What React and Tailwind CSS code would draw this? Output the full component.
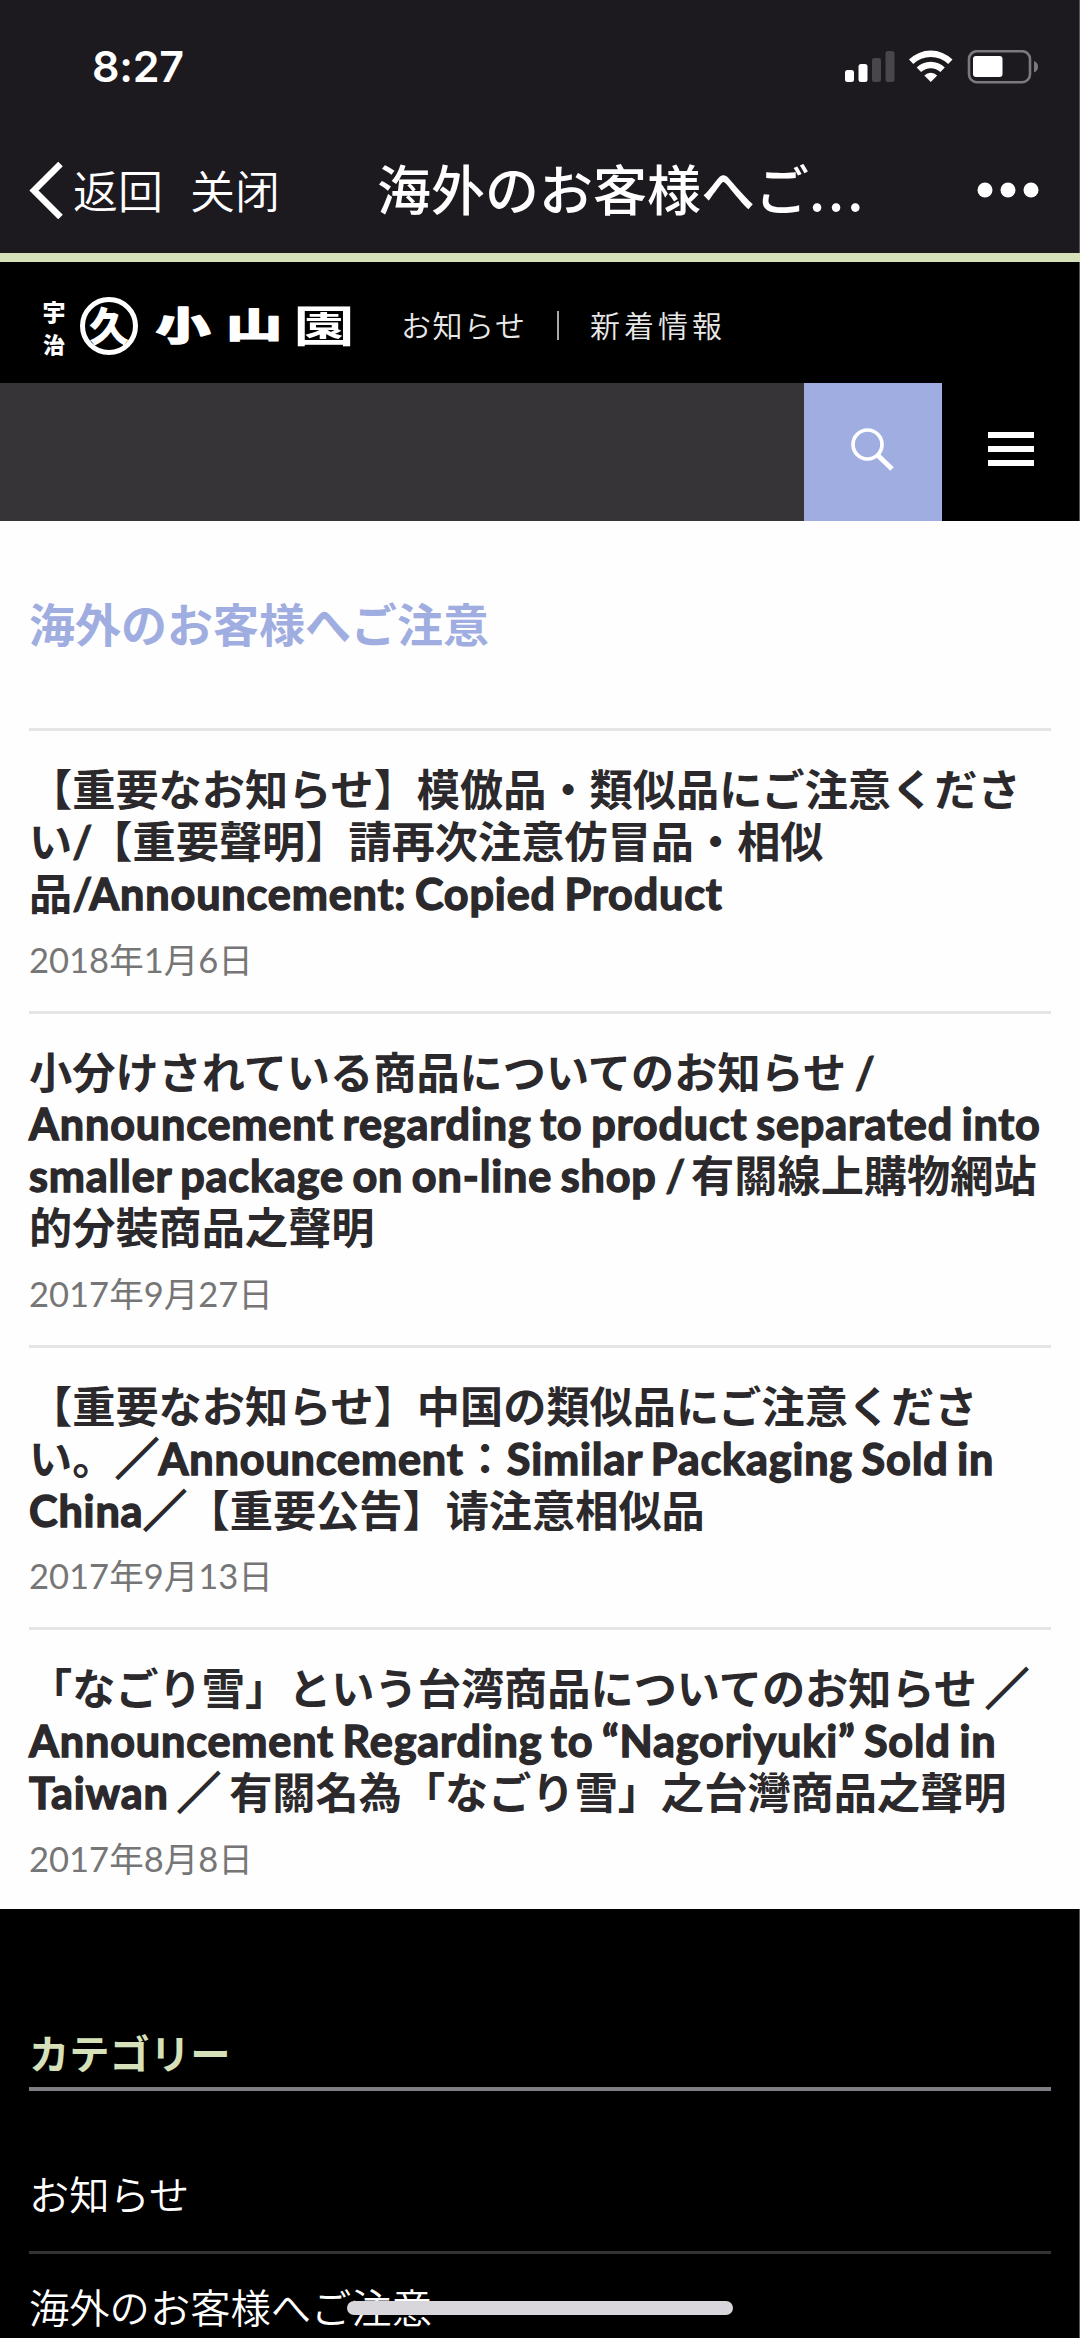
const articles = [
  {
    lines: [
      '【重要なお知らせ】模倣品・類似品にご注意くださ',
      'い/【重要聲明】請再次注意仿冒品・相似',
      '品/Announcement: Copied Product',
    ],
    date: '2018年1月6日',
  },
  {
    lines: [
      '小分けされている商品についてのお知らせ /',
      'Announcement regarding to product separated into',
      'smaller package on on-line shop / 有關線上購物網站',
      '的分裝商品之聲明',
    ],
    date: '2017年9月27日',
  },
  {
    lines: [
      '【重要なお知らせ】中国の類似品にご注意くださ',
      'い。／Announcement：Similar Packaging Sold in',
      'China／【重要公告】请注意相似品',
    ],
    date: '2017年9月13日',
  },
  {
    lines: [
      '「なごり雪」という台湾商品についてのお知らせ ／',
      'Announcement Regarding to “Nagoriyuki” Sold in',
      'Taiwan ／ 有關名為「なごり雪」之台灣商品之聲明',
    ],
    date: '2017年8月8日',
  },
];

const categories = ['お知らせ', '海外のお客様へご注意'];

function StatusBar() {
  return (
    <div className="flex h-[127px] items-start justify-between pl-[92px] pr-[41px] pt-[42px]">
      <span className="font-['Inter',sans-serif] text-[43px] font-semibold leading-[48px] tracking-[-0.3px]">8:27</span>
      <svg width="194" height="34" viewBox="0 0 194 34" className="mt-[8px]" fill="#fff">
        <rect x="0" y="20" width="9" height="12" rx="2.5" />
        <rect x="13.5" y="14" width="9" height="18" rx="2.5" />
        <rect x="27" y="8" width="9" height="24" rx="2.5" fill="#48464b" />
        <rect x="40.5" y="1" width="9" height="31" rx="2.5" fill="#48464b" />
        <path d="M64 9.5a31 31 0 0 1 43.5 0l-4.3 4.6a25 25 0 0 0-34.9 0z" />
        <path d="M71.7 17.5a20 20 0 0 1 28.1 0l-4.4 4.6a13.8 13.8 0 0 0-19.3 0z" />
        <path d="M79.3 25.4a9.3 9.3 0 0 1 12.9 0l-6.4 6.7z" />
        <rect x="124" y="1.2" width="61" height="31" rx="8" fill="none" stroke="#7b797e" strokeWidth="2.6" />
        <rect x="128" y="6" width="29.5" height="21" rx="3" />
        <path d="M189 11q4 1.5 4 5.7t-4 5.7z" fill="#7b797e" />
      </svg>
    </div>
  );
}

function NavBar() {
  return (
    <div className="flex h-[126px] items-center pl-[29px] pr-[41px]">
      <svg width="36" height="58" viewBox="0 0 36 58" fill="none" stroke="#fff" strokeWidth="6.5">
        <path d="M31.5 3L5 29.5L31.5 56" />
      </svg>
      <span className="ml-[8px] w-[117px] text-[45px] font-[350]">返回</span>
      <span className="w-[187px] text-[45px] font-[350]">关闭</span>
      <h1 className="flex items-baseline whitespace-nowrap pb-[5px] text-[54px] font-medium">
        海外のお客様へご
        <span className="tracking-[3px]">...</span>
      </h1>
      <svg width="62" height="16" viewBox="0 0 62 16" className="ml-auto" fill="#fff">
        <circle cx="8" cy="8" r="7.5" />
        <circle cx="31" cy="8" r="7.5" />
        <circle cx="54" cy="8" r="7.5" />
      </svg>
    </div>
  );
}

function Logo() {
  return (
    <svg
      width="316"
      height="68"
      viewBox="0 0 316 68"
      className="font-['Noto_Sans_CJK_JP',sans-serif] font-black"
      fill="#fff"
      strokeLinejoin="round"
      textAnchor="middle"
    >
      <text x="12" y="29" fontSize="23">宇</text>
      <text x="12" y="61" fontSize="22">治</text>
      <circle cx="67" cy="34" r="26.5" fill="none" stroke="#fff" strokeWidth="5" />
      <text x="67" y="49" fontSize="40">久</text>
      <text transform="translate(141 48) scale(1.4 1)" fontSize="39" stroke="#fff" strokeWidth="1.5">小</text>
      <text transform="translate(212 46) scale(1.62 1)" fontSize="35" stroke="#fff" strokeWidth="1">山</text>
      <text transform="translate(282 50) scale(1.42 1)" fontSize="43" className="font-bold">園</text>
    </svg>
  );
}

function SiteHeader() {
  return (
    <header className="border-t-[9px] border-[#d6e1ba] bg-black shadow-[inset_-1px_0_0_#555]">
      <div className="flex h-[121px] items-center pl-[42px] pt-[6px]">
        <Logo />
        <nav className="ml-[43px] flex items-center whitespace-nowrap text-[30px] font-[350] text-[#e8e8e8]">
          <a href="#news" className="w-[156px] tracking-[1.5px]">お知らせ</a>
          <span className="mr-[31px] h-[29px] w-[2px] bg-[#aaa]" />
          <a href="#updates" className="tracking-[4px]">新着情報</a>
        </nav>
      </div>
      <div className="flex h-[138px]">
        <div className="flex-1 bg-[#363436]" />
        <button type="button" aria-label="Search" className="flex w-[138px] items-center justify-center bg-[#9fade0] pb-[6px] pr-[2px]">
          <svg width="46" height="46" viewBox="0 0 46 46" fill="none" stroke="#fff">
            <circle cx="18.5" cy="18.5" r="14.5" strokeWidth="3.7" />
            <path d="M29 29.5L43 43" strokeWidth="5" />
          </svg>
        </button>
        <button type="button" aria-label="Menu" className="flex w-[138px] flex-col items-center justify-center gap-[8px] pb-[6px]">
          <span className="h-[6px] w-[46px] bg-white" />
          <span className="h-[6px] w-[46px] bg-white" />
          <span className="h-[6px] w-[46px] bg-white" />
        </button>
      </div>
    </header>
  );
}

// Latin runs and slashes are set heavier than the kanji and kana around them
function TitleLine({ text }) {
  return (
    <span className="block">
      {text.split(/([/／]|[ A-Za-z:“”-]+)/).map((part, i) => {
        if (part === '/') {
          return <span key={i} className="tracking-[-3px] [-webkit-text-stroke:0.8px]">/</span>;
        }
        if (part === '／') {
          return <span key={i} className="[-webkit-text-stroke:2px]">／</span>;
        }
        if (i % 2 === 1) {
          return (
            <span key={i} className="tracking-[0.83px] [word-spacing:-2.7px] [-webkit-text-stroke:1.4px]">
              {part}
            </span>
          );
        }
        return part;
      })}
    </span>
  );
}

function Article({ lines, date }) {
  return (
    <article className="border-t-[3px] border-[#e5e5e5] pb-[25px] pt-[33px]">
      <h3 className="whitespace-nowrap text-[43.2px] font-bold leading-[51.84px] text-[#2b292c]">
        {lines.map((line) => (
          <TitleLine key={line} text={line} />
        ))}
      </h3>
      <p className="mt-[14px] text-[34.56px] leading-[52px] text-[#767676]">{date}</p>
    </article>
  );
}

export default function App() {
  return (
    <div className="relative h-[2338px] w-[1080px] overflow-hidden bg-[#fefefe] font-['Lato','Noto_Sans_CJK_JP',sans-serif]">
      <div className="bg-[#1c191f] font-['Noto_Sans_CJK_SC',sans-serif] text-white shadow-[inset_-1px_0_0_#555]">
        <StatusBar />
        <NavBar />
      </div>
      <SiteHeader />

      <main className="h-[1388px] px-[29px]">
        <h2 className="h-[207px] pt-[74px] text-[46px] font-bold leading-[60px] text-[#9fade0]">
          海外のお客様へご注意
        </h2>
        {articles.map((article) => (
          <Article key={article.date} {...article} />
        ))}
      </main>

      <footer className="h-[429px] bg-black px-[29px] pt-[115px] text-[40.3px] text-white shadow-[inset_-1px_0_0_#555]">
        <h2 className="h-[67px] border-b-[4px] border-[#807e82] font-bold leading-[60px] text-[#d6e1ba]">カテゴリー</h2>
        <ul className="pt-[50px] font-[350]">
          {categories.map((category) => (
            <li key={category} className="h-[113px] whitespace-nowrap border-b-[3px] border-[#333] pt-[24px] leading-[60px]">
              {category}
            </li>
          ))}
        </ul>
      </footer>

      <div className="absolute bottom-[23px] left-[347px] h-[14px] w-[386px] rounded-full bg-[#d8d6da]" />
    </div>
  );
}
